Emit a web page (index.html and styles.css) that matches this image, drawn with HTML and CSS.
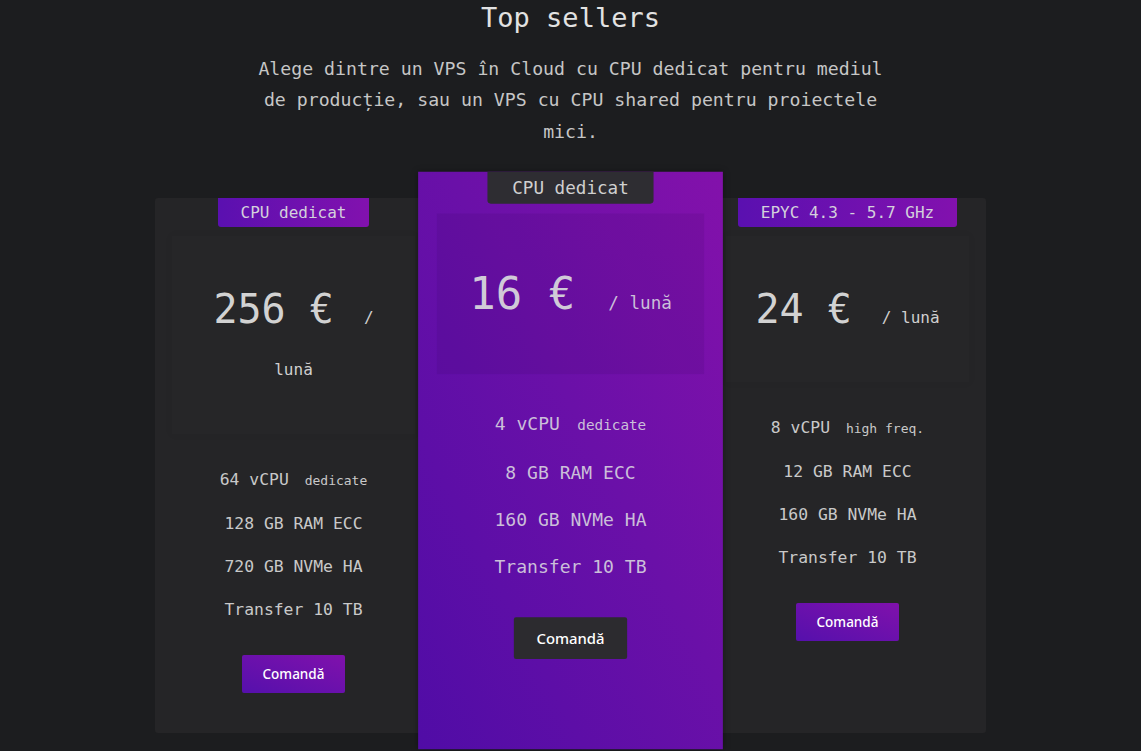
FILE: index.html
```html
<!DOCTYPE html>
<html lang="ro">
<head>
<meta charset="utf-8">
<title>Top sellers</title>
<link rel="stylesheet" href="styles.css">
</head>
<body>
<section class="pricing">
  <h1 class="title">Top sellers</h1>
  <p class="lead">Alege dintre un VPS în Cloud cu CPU dedicat pentru mediul de producție, sau un VPS cu CPU shared pentru proiectele mici.</p>

  <div class="plans">
    <article class="plan">
      <div class="tag">CPU dedicat</div>
      <div class="price"><span class="amount">256 €</span> <span class="per">/ lună</span></div>
      <ul class="specs">
        <li>64 vCPU <small>dedicate</small></li>
        <li>128 GB RAM ECC</li>
        <li>720 GB NVMe HA</li>
        <li>Transfer 10 TB</li>
      </ul>
      <a class="order" href="#">Comandă</a>
    </article>

    <article class="plan plan-featured">
      <div class="tag">CPU dedicat</div>
      <div class="price"><span class="amount">16 €</span> <span class="per">/ lună</span></div>
      <ul class="specs">
        <li>4 vCPU <small>dedicate</small></li>
        <li>8 GB RAM ECC</li>
        <li>160 GB NVMe HA</li>
        <li>Transfer 10 TB</li>
      </ul>
      <a class="order" href="#">Comandă</a>
    </article>

    <article class="plan">
      <div class="tag">EPYC 4.3 - 5.7 GHz</div>
      <div class="price"><span class="amount">24 €</span> <span class="per">/ lună</span></div>
      <ul class="specs">
        <li>8 vCPU <small>high freq.</small></li>
        <li>12 GB RAM ECC</li>
        <li>160 GB NVMe HA</li>
        <li>Transfer 10 TB</li>
      </ul>
      <a class="order" href="#">Comandă</a>
    </article>
  </div>
</section>
</body>
</html>
```

FILE: styles.css
```css
* {
  box-sizing: border-box;
}

html,
body {
  margin: 0;
  padding: 0;
  background: #1c1d1f;
}

body {
  font-family: "DejaVu Sans Mono", "Liberation Mono", monospace;
  color: #c9c9c9;
  min-height: 751px;
}

.pricing {
  display: flex;
  flex-direction: column;
  align-items: center;
}

.title {
  margin: 0;
  font-size: 27px;
  font-weight: normal;
  line-height: 36px;
  color: #e2e2e2;
}

.lead {
  margin: 17px 0 0;
  max-width: 640px;
  font-size: 18.2px;
  line-height: 31.3px;
  text-align: center;
  color: #c6c6c6;
}

.plans {
  display: flex;
  align-items: stretch;
  margin-top: 51px;
}

.plan {
  width: 277px;
  display: flex;
  flex-direction: column;
  align-items: center;
  padding: 0 17px 40px;
  background: #252527;
  border-radius: 3px;
}

.tag {
  height: 29px;
  line-height: 29px;
  padding: 0 23px;
  font-size: 16px;
  color: #d4d0dc;
  background: linear-gradient(to right, #5a10b0, #8211ae);
  border-radius: 0 0 3px 3px;
  white-space: nowrap;
}

.price {
  align-self: stretch;
  margin-top: 9px;
  padding: 47px 20px;
  font-size: 40px;
  line-height: 52px;
  text-align: center;
  background: #262628;
  box-shadow: 0 0 8px rgba(0, 0, 0, 0.06);
  color: #d2d2d2;
}

.per {
  margin-left: 6px;
  font-size: 16px;
  line-height: 16px;
  color: #cfcfcf;
}

.specs {
  list-style: none;
  margin: 24px 0;
  padding: 0;
  text-align: center;
  font-size: 16.4px;
  line-height: 43px;
  color: #c9c9c9;
}

.specs small {
  margin-left: 6px;
  font-size: 13px;
}

.order {
  display: block;
  height: 38px;
  line-height: 38px;
  padding: 0 21px;
  font-family: "Noto Sans", "Open Sans", sans-serif;
  font-size: 13.5px;
  font-weight: 500;
  color: #ffffff;
  text-decoration: none;
  background: linear-gradient(to top right, #5510ac, #8011ac);
  border-radius: 2px;
}

/* highlighted middle plan: purple card, scaled up above its neighbours */
.plan-featured {
  position: relative;
  z-index: 1;
  margin-bottom: 10px;
  transform: scale(1.1);
  border-radius: 0;
  background: linear-gradient(to top right, #500ca6, #6a10a8 55%, #8311ab);
  box-shadow: 0 0 6px rgba(0, 0, 0, 0.35);
}

.plan-featured .tag {
  background: #2e2d32;
  color: #d0d0d0;
}

.plan-featured .price {
  background: rgba(40, 0, 80, 0.1);
  box-shadow: none;
  color: #d0cad8;
}

.plan-featured .per,
.plan-featured .specs {
  color: #cbbfd9;
}

.plan-featured .order {
  background: #2c2b2f;
}
```
